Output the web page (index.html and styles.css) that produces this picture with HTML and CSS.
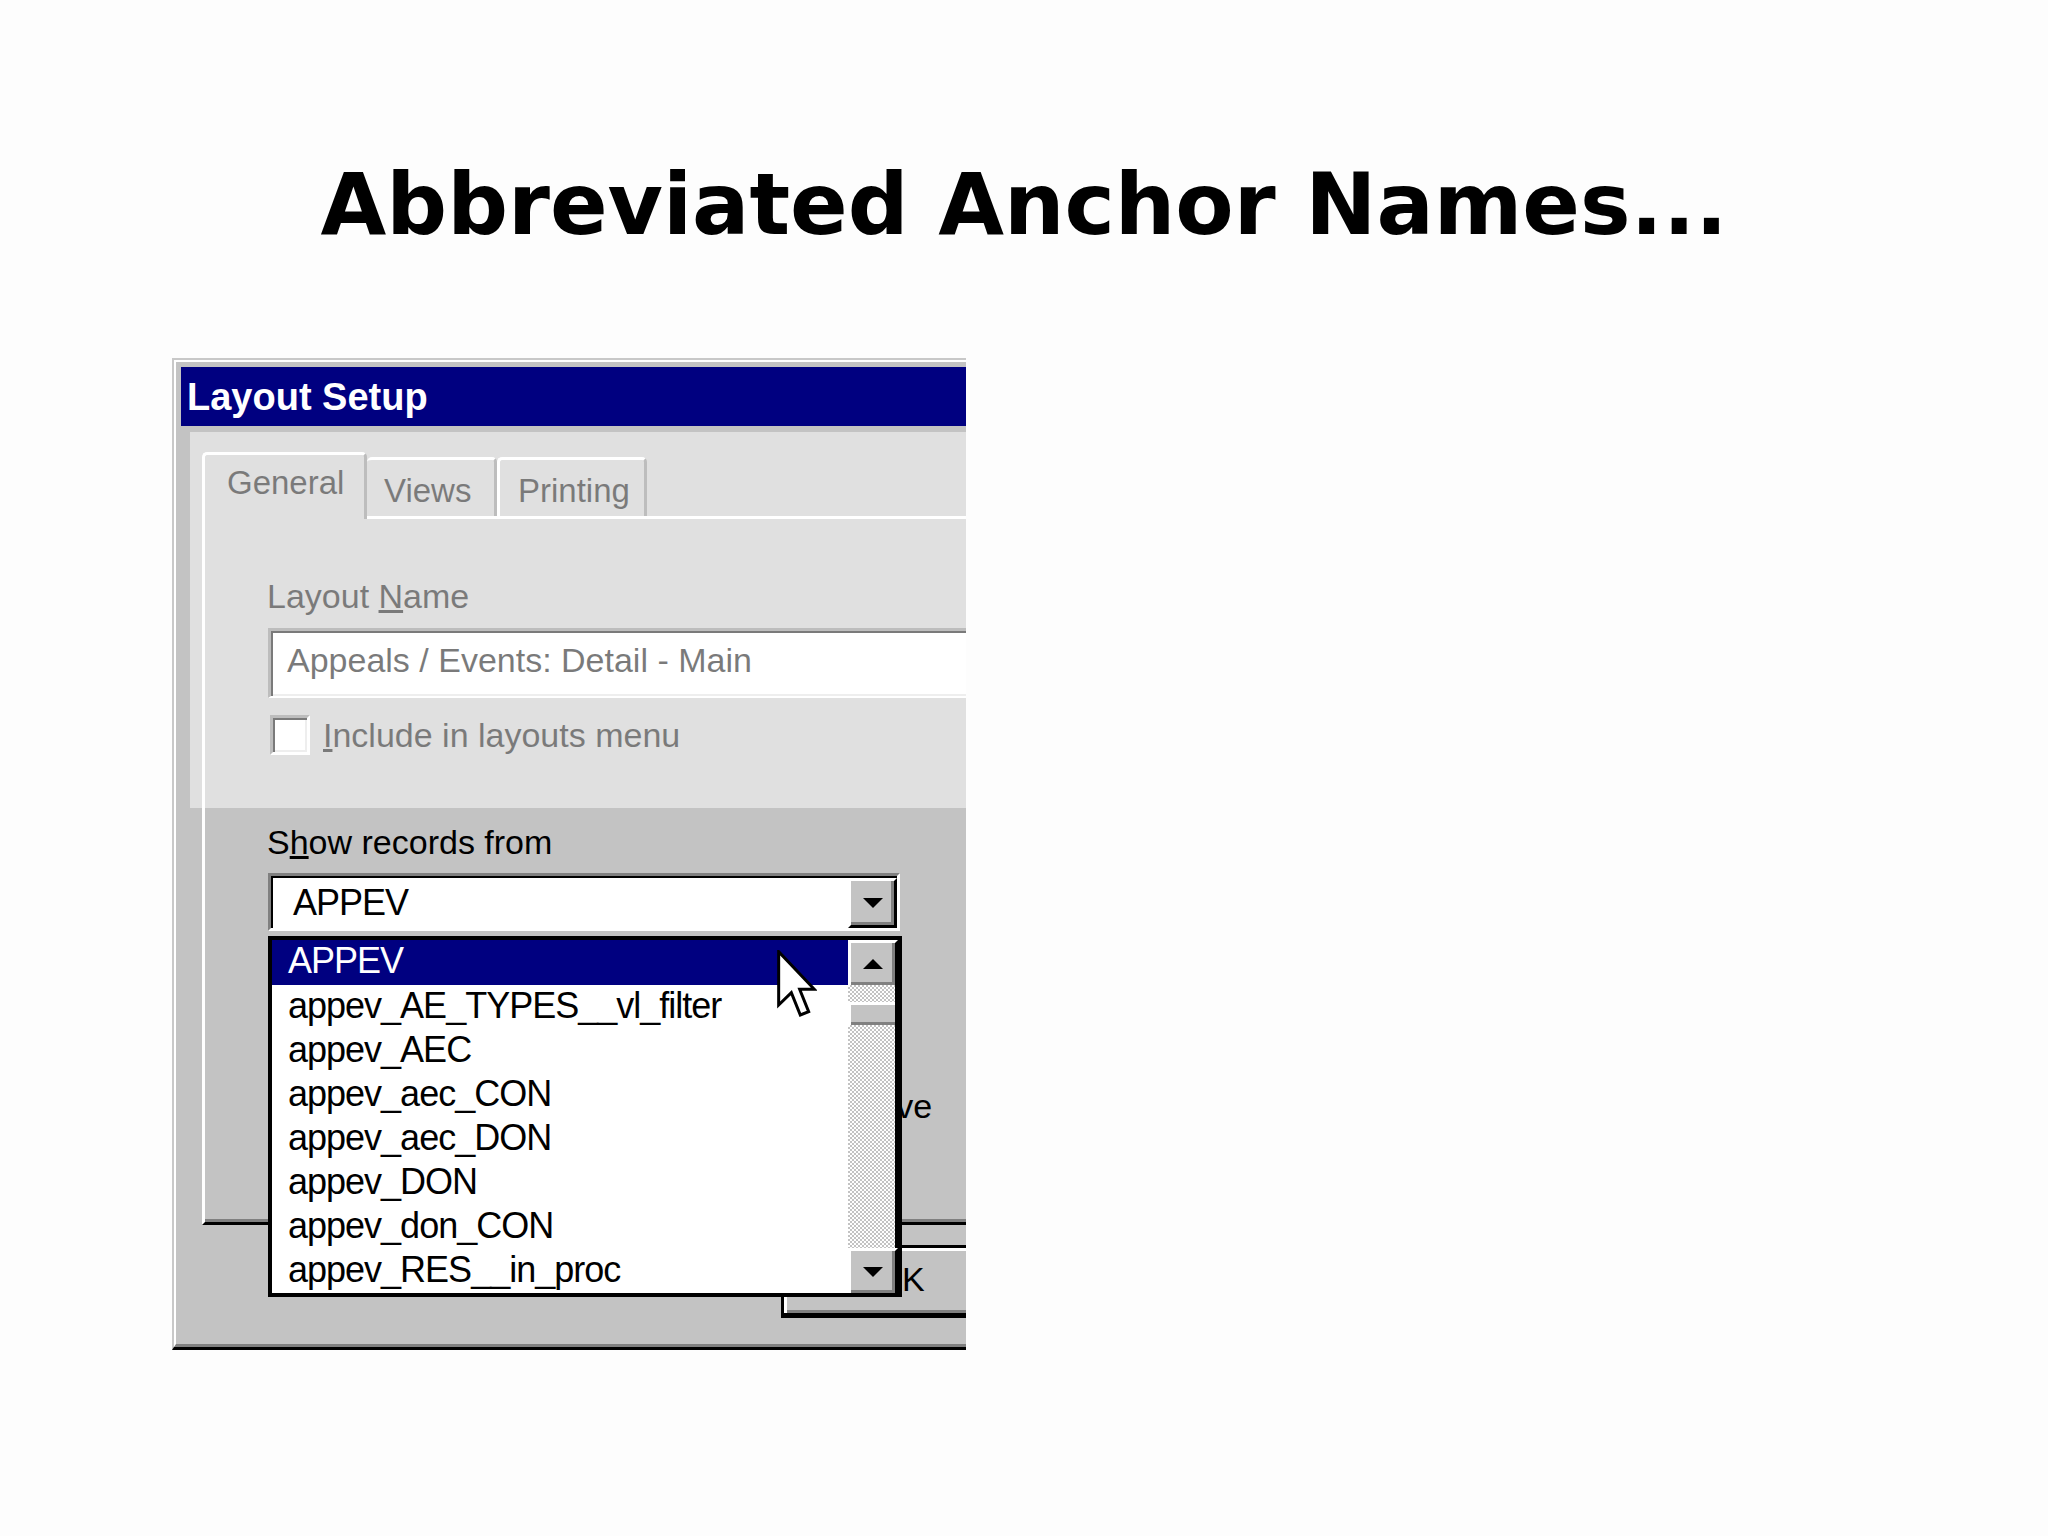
FILE: index.html
```html
<!DOCTYPE html>
<html lang="en">
<head>
    <meta charset="UTF-8">
    <meta name="viewport" content="width=device-width, initial-scale=1.0">
    <title>Abbreviated Anchor Names</title>
    <link rel="stylesheet" href="styles.css">
</head>
<body>
    <h1 class="slideTitle">Abbreviated Anchor Names...</h1>

    <div class="dialog">
        <div class="dialogFrame">
            <div class="titleBar">Layout Setup</div>
            <div class="dialogBody">
                <div class="tabs">
                    <div class="tab active">General</div>
                    <div class="tab">Views</div>
                    <div class="tab">Printing</div>
                </div>
                <div class="tabPanel">
                    <div class="label">Layout <u>N</u>ame</div>
                    <div class="textField">Appeals / Events: Detail - Main</div>
                    <div class="checkRow">
                        <span class="checkBox"></span>
                        <span class="label"><u>I</u>nclude in layouts menu</span>
                    </div>
                    <div class="label showLabel">S<u>h</u>ow records from</div>
                    <div class="comboWrap">
                        <div class="combo">
                            <span class="comboText">APPEV</span>
                            <span class="comboBtn">
                                <svg width="20" height="10" viewBox="0 0 20 10"><polygon points="0,0 20,0 10,10" fill="#000"/></svg>
                            </span>
                        </div>
                        <!-- open drop-down list -->
                        <div class="dropList">
                            <div class="rows">
                                <div class="row selected">APPEV</div>
                                <div class="row">appev_AE_TYPES__vl_filter</div>
                                <div class="row">appev_AEC</div>
                                <div class="row">appev_aec_CON</div>
                                <div class="row">appev_aec_DON</div>
                                <div class="row">appev_DON</div>
                                <div class="row">appev_don_CON</div>
                                <div class="row">appev_RES__in_proc</div>
                            </div>
                            <div class="scrollBar">
                                <span class="scrollBtn">
                                    <svg width="20" height="10" viewBox="0 0 20 10"><polygon points="0,10 20,10 10,0" fill="#000"/></svg>
                                </span>
                                <div class="track"><span class="thumb"></span></div>
                                <span class="scrollBtn">
                                    <svg width="20" height="10" viewBox="0 0 20 10"><polygon points="0,0 20,0 10,10" fill="#000"/></svg>
                                </span>
                            </div>
                            <svg class="cursor" width="40" height="70" viewBox="0 0 12 21">
                                <path d="M0.5 0.5 V16.5 L4.3 12.8 L7 19.5 L9.5 18.5 L6.8 11.8 H11.2 Z" fill="#fff" stroke="#000" stroke-width="0.9" stroke-linejoin="miter"/>
                            </svg>
                        </div>
                    </div>
                    <div class="label behindLabel">Inactive</div>
                </div>
                <div class="buttonRow">
                    <div class="okBtn">OK</div>
                </div>
            </div>
            <div class="highlight"></div>
        </div>
    </div>
</body>
</html>
```

FILE: styles.css
```css
body {
    margin: 0;
    background: #fdfdfd;
    font-family: 'Liberation Sans', Arial, sans-serif;
    color: #000;
}

.slideTitle {
    margin: 163px 0 0;
    font: bold 85px/84px 'DejaVu Sans', sans-serif;
    text-align: center;
}

/* Win95 style dialog, cut off on the right */
.dialog {
    width: 794px;
    margin: 111px 0 0 172px;
    border-top: 2px solid #c8c8c8;
    border-left: 2px solid #c8c8c8;
    border-bottom: 3px solid #000;
    overflow: hidden;
    box-sizing: border-box;
}
.dialogFrame {
    position: relative;
    padding: 5px 0 0 5px;
    border-top: 2px solid #fff;
    border-left: 2px solid #fff;
    border-bottom: 3px solid #808080;
    background: #c3c3c3;
}
.titleBar {
    height: 59px;
    padding: 1px 0 0 6px;
    background: #000080;
    color: #fff;
    font: bold 38px/58px 'Liberation Sans', sans-serif;
    box-sizing: border-box;
}
.dialogBody {
    padding: 26px 0 26px 21px;
}

/* tabs */
.tabs {
    display: flex;
    align-items: flex-end;
    height: 64px;
}
.tab {
    height: 59px;
    padding: 11px 0 0 14px;
    border-top: 3px solid #fff;
    border-left: 3px solid #fff;
    border-right: 3px solid #808080;
    border-radius: 5px 5px 0 0;
    background: #c3c3c3;
    font-size: 33px;
    line-height: 40px;
    box-sizing: border-box;
}
.tab.active {
    position: relative;
    z-index: 1;
    width: 165px;
    height: 67px;
    margin-bottom: -3px;
    padding: 8px 0 0 22px;
}
.tab.active + .tab {
    width: 130px;
    padding-left: 17px;
    border-left: 0;
}
.tab:last-child {
    width: 150px;
    padding-left: 18px;
}
.tabPanel {
    height: 709px;
    padding: 57px 0 0 62px;
    border-top: 3px solid #fff;
    border-left: 3px solid #fff;
    border-bottom: 3px solid #000;
    box-shadow: inset 0 -3px #808080;
    box-sizing: border-box;
}

.label {
    font-size: 34px;
    line-height: 40px;
}
.textField {
    height: 70px;
    margin: 12px 0 0 1px;
    padding: 9px 0 0 16px;
    border-top: 3px solid #808080;
    border-left: 3px solid #808080;
    border-bottom: 2px solid #fff;
    box-shadow: inset 2px 2px #000, inset 0 -2px #dfdfdf;
    background: #fff;
    font-size: 34px;
    line-height: 40px;
    box-sizing: border-box;
}
.checkRow {
    display: flex;
    gap: 13px;
    margin-top: 17px;
}
.checkBox {
    width: 40px;
    height: 40px;
    margin-left: 3px;
    border-top: 3px solid #808080;
    border-left: 3px solid #808080;
    border-bottom: 3px solid #fff;
    border-right: 3px solid #fff;
    box-shadow: inset 2px 2px #000, inset -2px -2px #dfdfdf;
    background: #fff;
    box-sizing: border-box;
}
.showLabel {
    margin-top: 67px;
}

/* combo box */
.comboWrap {
    position: relative;
    width: 632px;
    margin: 11px 0 0 1px;
}
.combo {
    display: flex;
    justify-content: space-between;
    align-items: flex-start;
    height: 58px;
    border-top: 3px solid #808080;
    border-left: 3px solid #808080;
    border-bottom: 3px solid #fff;
    border-right: 3px solid #fff;
    box-shadow: inset 2px 2px #000;
    background: #fff;
    box-sizing: border-box;
}
.comboText {
    padding: 7px 0 0 22px;
    font-size: 36px;
    line-height: 40px;
    letter-spacing: -1px;
}
.comboBtn, .scrollBtn {
    display: flex;
    align-items: center;
    justify-content: center;
    background: #c3c3c3;
    border-top: 3px solid #fff;
    border-left: 3px solid #fff;
    border-right: 3px solid #000;
    box-shadow: inset -3px -3px #808080;
    box-sizing: border-box;
}
.comboBtn {
    width: 49px;
    height: 50px;
    margin-top: 2px;
    border-bottom: 3px solid #000;
}

.dropList {
    position: absolute;
    top: calc(100% + 5px);
    left: 0;
    z-index: 5;
    display: flex;
    width: 634px;
    height: 361px;
    border: 4px solid #000;
    background: #fff;
    box-sizing: border-box;
}
.rows {
    flex: 1;
}
.row {
    height: 44px;
    padding-left: 16px;
    font-size: 36px;
    line-height: 41px;
    letter-spacing: -1px;
    white-space: nowrap;
    box-sizing: border-box;
}
.row.selected {
    height: 45px;
    background: #000080;
    color: #fff;
}
.scrollBar {
    display: flex;
    flex-direction: column;
    width: 50px;
}
.scrollBtn {
    height: 45px;
}
.track {
    flex: 1;
    border-right: 3px solid #000;
    background: repeating-conic-gradient(#c3c3c3 0% 25%, #fff 0% 50%) 0 0 / 4px 4px;
}
.thumb {
    display: block;
    height: 23px;
    margin-top: 17px;
    border-top: 3px solid #fff;
    border-left: 3px solid #fff;
    box-shadow: inset 0 -3px #808080;
    background: #c3c3c3;
    box-sizing: border-box;
}
.cursor {
    position: absolute;
    left: 505px;
    top: 10px;
}

.behindLabel {
    margin: 155px 0 0 548px;
}

.buttonRow {
    margin: 20px 0 0 579px;
}
.okBtn {
    width: 238px;
    height: 73px;
    padding-top: 11px;
    border: 3px solid #000;
    border-bottom-width: 5px;
    box-shadow: inset 3px 3px #fff, inset -3px -3px #808080;
    text-align: center;
    font-size: 34px;
    line-height: 40px;
    box-sizing: border-box;
}

/* pale wash over the top half of the dialog */
.highlight {
    position: absolute;
    left: 14px;
    top: 70px;
    right: 0;
    height: 376px;
    background: rgba(255, 255, 255, 0.48);
    z-index: 3;
}
```
